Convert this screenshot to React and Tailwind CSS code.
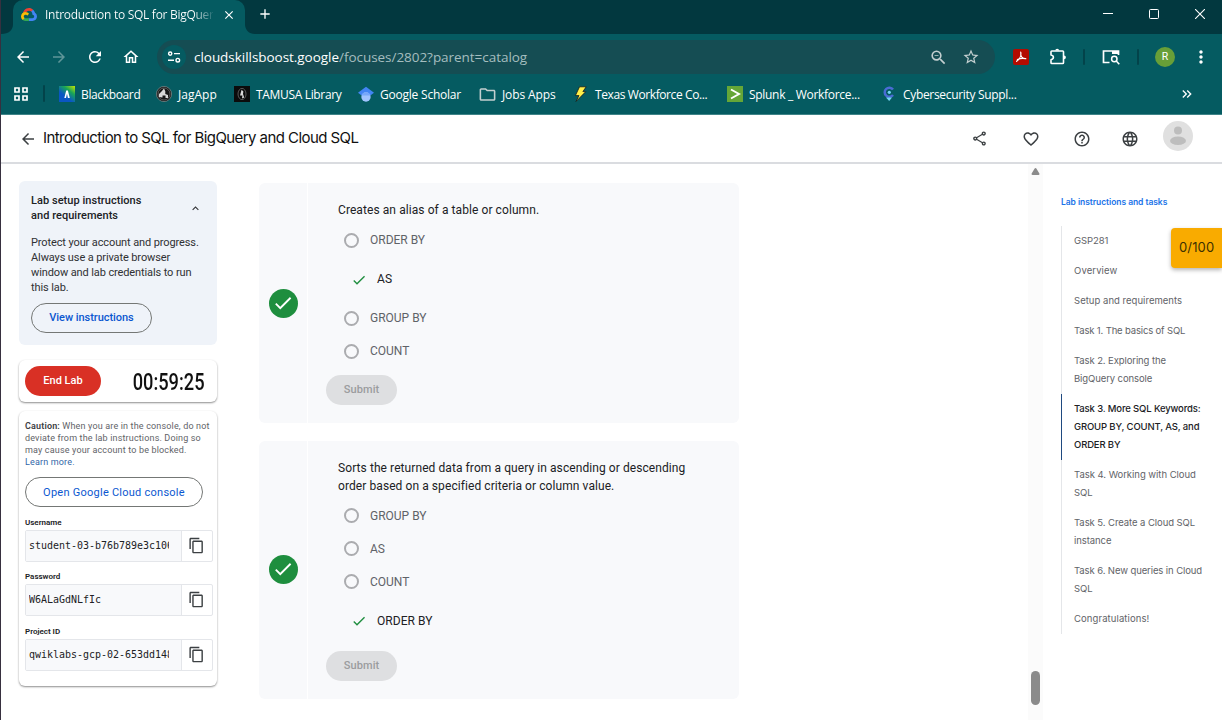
import React from "react";
import {
  MdArrowBack, MdArrowForward, MdRefresh, MdOutlineHome, MdOutlineShare, MdFavoriteBorder,
  MdHelpOutline, MdLanguage, MdOutlineContentCopy, MdCheck, MdClose, MdAdd, MdStarBorder,
  MdMoreVert, MdKeyboardArrowUp, MdOutlineZoomOut, MdOutlineFolder,
  MdKeyboardDoubleArrowRight,
} from "react-icons/md";

const cx = (...c) => c.filter(Boolean).join(" ");

function CloudLogo() {
  return (
    <svg width="16" height="13" viewBox="0 0 256 206" className="shrink-0">
      <path fill="#EA4335" d="M170.252 56.819l22.253-22.253 1.483-9.37C153.437-11.677 88.976-7.496 52.42 33.92 42.267 45.423 34.734 59.764 30.717 74.573l7.97-1.123 44.505-7.34 3.436-3.513c19.797-21.742 53.27-24.667 76.128-6.168l7.496.39z" />
      <path fill="#4285F4" d="M224.205 73.918a100.249 100.249 0 00-30.217-48.722l-31.232 31.232a55.515 55.515 0 0120.379 44.037v5.544c15.35 0 27.797 12.445 27.797 27.796 0 15.352-12.446 27.485-27.797 27.485h-55.671l-5.466 5.934v33.34l5.466 5.231h55.67c39.93.311 72.553-31.494 72.864-71.424a72.303 72.303 0 00-31.793-60.453" />
      <path fill="#34A853" d="M71.87 205.796h55.593V161.29H71.87a27.275 27.275 0 01-11.4-2.498l-7.887 2.42-22.409 22.253-1.952 7.574a71.927 71.927 0 0043.649 14.757" />
      <path fill="#FBBC05" d="M71.87 61.426C31.94 61.664-.237 94.228.001 134.158a72.301 72.301 0 0028.222 56.88l32.248-32.246c-13.99-6.322-20.208-22.786-13.887-36.776 6.32-13.99 22.786-20.208 36.775-13.888a27.796 27.796 0 0113.887 13.888l32.248-32.248A72.224 72.224 0 0071.87 61.426" />
    </svg>
  );
}

function TabStrip() {
  return (
    <div className="flex h-[34px] bg-[#02383f] text-white">
      <svg width="12" height="34" className="shrink-0"><path d="M0 34C8 34 12 30 12 24V34z" fill="#055b61" /></svg>
      <div className="flex w-[232px] shrink-0 items-center rounded-t-[10px] bg-[#055b61] pb-[5px] pl-2">
        <CloudLogo />
        <div className="ml-2 w-[168px] overflow-hidden whitespace-nowrap bg-gradient-to-r from-white from-88% to-white/10 bg-clip-text font-['Open_Sans',sans-serif] text-[12px] leading-4 tracking-[-0.28px] text-transparent">
          Introduction to SQL for BigQuery
        </div>
        <MdClose className="ml-[9px] size-[14px]" />
      </div>
      <svg width="10" height="34" className="shrink-0"><path d="M0 24C0 30 4 34 10 34H0z" fill="#055b61" /></svg>
      <MdAdd className="mt-[6px] ml-[2px] size-4" />
      <div className="ml-auto flex h-7 items-center gap-[36px] pr-[17px]">
        <svg width="10" height="10"><path d="M0 4.5H10" stroke="white" /></svg>
        <svg width="10" height="10"><rect x=".5" y=".5" width="9" height="9" rx="1" fill="none" stroke="white" /></svg>
        <svg width="10" height="10"><path d="M0 0L10 10M10 0L0 10" stroke="white" strokeWidth="1.1" /></svg>
      </div>
    </div>
  );
}

function AddressRow() {
  return (
    <div className="flex h-[46px] items-center text-white">
      <MdArrowBack className="ml-[13px] size-[18px]" />
      <MdArrowForward className="ml-[18px] size-[18px] text-[#5f9699]" />
      <MdRefresh className="ml-[18px] size-[18px]" />
      <MdOutlineHome className="ml-[18px] size-[18px]" />
      <div className="ml-[17px] flex h-[34px] w-[838px] items-center rounded-full bg-[#154d53] pl-[5px]">
        <div className="flex size-6 items-center justify-center rounded-full bg-[#055b61]">
          <svg width="14" height="14" viewBox="0 0 14 14" fill="none" stroke="white" strokeWidth="1.4">
            <circle cx="3.2" cy="3.6" r="1.6" /><path d="M7 3.6H13M1 10.2H7" /><circle cx="10.8" cy="10.2" r="1.8" />
          </svg>
        </div>
        <div className="ml-2 whitespace-nowrap font-['Open_Sans',sans-serif] text-[13.5px] tracking-[-0.04px] text-[#a5bdbf]">
          <span className="text-white">cloudskillsboost.google</span>/focuses/2802?parent=catalog
        </div>
        <MdOutlineZoomOut className="ml-auto size-[19px] text-[#c3cfd0]" />
        <MdStarBorder className="mr-[15px] ml-[14px] size-[18px] text-[#c3cfd0]" />
      </div>
      <svg width="16" height="16" viewBox="0 0 16 16" className="ml-[18px]">
        <rect width="16" height="16" rx="2" fill="#b30b00" />
        <path d="M7.7 3.2C8.4 5.8 7 9.8 3.6 12.3M7.9 4C7.2 7 9.4 9.8 12.8 9.7M4.4 10.6C7 9.3 9.5 8.9 12.6 9.6" fill="none" stroke="white" strokeWidth="1.2" strokeLinecap="round" />
      </svg>
      <svg width="18" height="18" viewBox="0 0 18 18" className="ml-5">
        <path d="M2 7V3.8Q2 3 2.8 3H13.7Q14.5 3 14.5 3.8V14.7Q14.5 15.5 13.7 15.5H2.8Q2 15.5 2 14.7V11.7Q4.4 11.2 4.4 9.3T2 7z" fill="none" stroke="white" strokeWidth="1.6" strokeLinejoin="round" />
        <path d="M6.3 2.6A1.9 1.9 0 0 1 10.1 2.6zM15 7.4A1.9 1.9 0 0 1 15 11.2z" fill="white" />
      </svg>
      <div className="ml-[16px] h-4 w-[2px] rounded bg-[#03434a]" />
      <svg width="18" height="16" viewBox="0 0 18 16" className="ml-[17px]" fill="none" stroke="white">
        <path d="M7.5 13.5H1.5V2H16.5V6" strokeWidth="1.7" /><path d="M10 2H17V5H10z" fill="white" stroke="none" />
        <circle cx="12.3" cy="10" r="2.7" strokeWidth="1.5" /><path d="M14.2 12L17.3 15.2" strokeWidth="1.6" />
      </svg>
      <div className="ml-[17px] h-4 w-[2px] rounded bg-[#03434a]" />
      <div className="ml-4 flex size-5 items-center justify-center rounded-full bg-[#689f38] font-['Roboto',sans-serif] text-[10.5px]">R</div>
      <MdMoreVert className="ml-[16px] size-5" />
    </div>
  );
}

function SealIcon({ square }) {
  return (
    <svg width="16" height="16" viewBox="0 0 16 16">
      {square ? <rect width="16" height="16" fill="#0b0b0b" /> : <circle cx="8" cy="8" r="7.6" fill="#171717" stroke="#9a9a9a" strokeWidth=".6" />}
      <ellipse cx="8" cy="8" rx={square ? 4 : 6} ry={square ? 5.6 : 6} fill="none" stroke="#777" strokeWidth=".7" />
      <path d={square ? "M6 9.5L7.6 3.8L9.4 5.5L9 8L10.2 11.5L8 12.4L8.4 9.6z" : "M3 11V8L5.5 5.5L8 2.5L9.3 5.2V8L12 9V12H9.5V9.5H6.5V11.5z"} fill="#d8d8d8" />
    </svg>
  );
}

const bookmarks = [
  {
    label: "Blackboard", box: "w-[97px]", track: "tracking-[-0.36px]",
    icon: (
      <svg width="16" height="16" viewBox="0 0 16 16">
        <defs><linearGradient id="bb" x1="1" y1="0" x2=".2" y2="1"><stop offset="0" stopColor="#c8e600" /><stop offset=".35" stopColor="#18a558" /><stop offset=".7" stopColor="#0a56c4" /></linearGradient></defs>
        <rect width="16" height="16" fill="url(#bb)" /><path d="M5.3 12L7.2 4.5H8.9L10.8 12H8.9L8 7.8L7 12z" fill="white" />
      </svg>
    ),
  },
  { label: "JagApp", box: "w-[78px]", track: "tracking-[0.02px]", icon: <SealIcon /> },
  { label: "TAMUSA Library", box: "w-[124px]", track: "tracking-[-0.33px]", icon: <SealIcon square /> },
  {
    label: "Google Scholar", box: "w-[121px]", track: "tracking-[-0.22px]",
    icon: (
      <svg width="16" height="16" viewBox="0 0 24 24"><path fill="#4285f4" d="M12 1L0 10l5 4h14l5-4z" /><circle cx="12" cy="16.5" r="7" fill="#a0c3ff" /><path fill="#76a7fa" d="M5.4 14.2a7 7 0 0 1 13.2 0z" /></svg>
    ),
  },
  { label: "Jobs Apps", box: "w-[94px]", track: "tracking-[-0.1px]", icon: <MdOutlineFolder className="-ml-px mr-[-1px] size-[19px] text-[#c3cfd0]" /> },
  {
    label: "Texas Workforce Co...", box: "w-[154px]", track: "tracking-[-0.4px]",
    icon: <svg width="16" height="16" viewBox="0 0 16 16"><path d="M6.5 .8H13.2L9.9 5.6H12.8L3 15.5L6 9.6H2.4z" fill="#fff04a" stroke="#15191a" strokeWidth=".8" /></svg>,
  },
  {
    label: "Splunk _ Workforce...", box: "w-[154px]", track: "tracking-[-0.3px]",
    icon: <svg width="16" height="16" viewBox="0 0 16 16"><rect width="16" height="16" fill="#65a637" /><path d="M4 3.5L12 8L4 12.5" fill="none" stroke="white" strokeWidth="1.9" /></svg>,
  },
  {
    label: "Cybersecurity Suppl...", box: "w-[140px]", track: "tracking-[-0.32px]",
    icon: <svg width="16" height="16" viewBox="0 0 16 16"><path d="M12 3.5A4.6 4.6 0 1 0 12 9" fill="none" stroke="#4a6cd4" strokeWidth="2.5" /><path d="M5 11.5H11L8.2 15z" fill="#74d4f5" /><circle cx="8.3" cy="6.3" r="1.6" fill="#74d4f5" /></svg>,
  },
];

function BookmarkRow() {
  return (
    <div className="flex h-[34px] items-start pt-[5px] font-['Open_Sans',sans-serif] text-[12px] text-white">
      <svg width="16" height="16" className="mt-[1px] ml-3" fill="none" stroke="white" strokeWidth="1.7">
        <path d="M2 2H6V6H2zM10 2H14V6H10zM2 10H6V14H2zM10 10H14V14H10z" />
      </svg>
      <div className="mr-[14px] ml-[14px] h-[17px] w-[2px] rounded bg-[#03434a]" />
      {bookmarks.map((b) => (
        <div key={b.label} className={cx("flex h-[18px] shrink-0 items-center gap-[6px] whitespace-nowrap leading-[17px]", b.box, b.track)}>
          <span className="shrink-0">{b.icon}</span>{b.label}
        </div>
      ))}
      <MdKeyboardDoubleArrowRight className="mt-[1px] ml-auto mr-[27px] size-4" />
    </div>
  );
}

function PageHeader() {
  return (
    <div className="flex h-[49px] items-center border-b-2 border-[#dadce0] bg-white text-[#3c4043]">
      <MdArrowBack className="ml-[18px] size-[18px]" />
      <div className="ml-[6px] whitespace-nowrap font-['Inter',sans-serif] text-[15px] tracking-[-0.57px] text-[#111]">
        Introduction to SQL for BigQuery and Cloud SQL
      </div>
      <MdOutlineShare className="ml-auto size-[17px]" />
      <MdFavoriteBorder className="ml-[34px] size-[18px]" />
      <MdHelpOutline className="ml-[33px] size-[18px]" />
      <MdLanguage className="ml-[30px] size-[18px]" />
      <svg width="30" height="30" className="mr-[29px] mb-[5px] ml-6">
        <circle cx="15" cy="15" r="15" fill="#e0e0e0" /><circle cx="15" cy="9.5" r="4" fill="#bdbdbd" /><ellipse cx="15" cy="19.8" rx="8" ry="4.3" fill="#bdbdbd" />
      </svg>
    </div>
  );
}

function Credential({ label, value, className }) {
  return (
    <div className={className}>
      <div className="font-['Roboto',sans-serif] text-[8px] leading-[10px] font-semibold text-[#202124]">{label}</div>
      <div className="mt-[2px] flex h-8 w-[188px] rounded-[2px] border border-[#e4e6ea]">
        <div className="flex w-[156px] items-center border-r border-[#e4e6ea] bg-[#f8f9fb] pl-[3px]">
          <div className="w-[140px] overflow-hidden whitespace-nowrap font-['DejaVu_Sans_Mono',monospace] text-[9.97px] leading-4 text-[#202124]">{value}</div>
        </div>
        <MdOutlineContentCopy className="mt-[6px] ml-[6px] size-[17px] text-[#3c4043]" />
      </div>
    </div>
  );
}

function LabPanel() {
  return (
    <div className="ml-[18px] mt-[17px] flex w-[198px] shrink-0 flex-col whitespace-nowrap font-['Roboto',sans-serif]">
      <div className="h-[164px] rounded-md bg-[#eff3f9] px-3 pt-3 text-[11px] leading-[15px] text-[#303134]">
        <div className="flex items-center justify-between">
          <div className="font-medium tracking-[0.04px] text-[#202124]">Lab setup instructions<br />and requirements</div>
          <MdKeyboardArrowUp className="mr-[3px] size-[13px]" />
        </div>
        <div className="mt-3 tracking-[-0.11px]">
          Protect your account and progress.<br />Always use a private browser<br />window and lab credentials to run<br />this lab.
        </div>
        <button className="mt-2 flex h-[30px] w-[121px] items-center justify-center rounded-full border border-[#747775] pb-[1px] font-medium tracking-[-0.04px] text-[#0b57d0]">View instructions</button>
      </div>
      <div className="mt-[15px] flex h-[42px] items-center justify-between rounded-md bg-white pr-[13px] pl-[6px] shadow-[0_1px_2px_rgba(0,0,0,0.45)]">
        <button className="h-[30px] w-[76px] rounded-full bg-[#d93025] text-[11px] font-medium text-white">End Lab</button>
        <div className="origin-right scale-x-[0.76] pt-[2px] text-[24px] leading-[30px] font-medium text-[#111]">00:59:25</div>
      </div>
      <div className="mt-[9px] h-[275px] rounded-md bg-white px-[6px] pt-[9px] shadow-[0_1px_2px_rgba(0,0,0,0.45)]">
        <div className="text-[9px] leading-3 tracking-[0.16px] text-[#5f6368]">
          <b className="font-semibold text-[#3c4043]">Caution:</b> When you are in the console, do not<br />deviate from the lab instructions. Doing so<br />may cause your account to be blocked.<br />
          <span className="text-[#3367a8]">Learn more.</span>
        </div>
        <button className="mt-[9px] flex h-[30px] w-[178px] items-center justify-center rounded-full border border-[#747775] pt-[2px] text-[11px] font-[450] tracking-[0.25px] text-[#0b57d0]">Open Google Cloud console</button>
        <Credential className="mt-[11px]" label="Username" value="student-03-b76b789e3c106" />
        <Credential className="mt-[10px]" label="Password" value="W6ALaGdNLfIc" />
        <Credential className="mt-[11px]" label="Project ID" value="qwiklabs-gcp-02-653dd148" />
      </div>
    </div>
  );
}

function Question({ lines, options, answer, className, textClass, badgeClass, labelClass, submitClass }) {
  return (
    <div className={cx("flex w-[480px] rounded-md bg-[#f8f9fb]", className)}>
      <div className={cx("flex w-[49px] items-center border-r border-white pl-[10px]", badgeClass)}>
        <div className="flex size-[29px] items-center justify-center rounded-full bg-[#1e8e3e] pr-px pb-px"><MdCheck className="size-[22px] text-white" /></div>
      </div>
      <div className="pt-[18px] pl-[18px] font-['Roboto',sans-serif] text-[12px] text-[#202124]">
        <div className={cx("pl-3 leading-[18px] tracking-[0.08px] whitespace-nowrap", textClass)}>
          {lines.map((l) => <div key={l}>{l}</div>)}
        </div>
        {options.map((o) =>
          o === answer ? (
            <div key={o} className="flex h-[45px] items-center gap-[10px] pl-[25px]">
              <MdCheck className="size-4 text-[#1e8e3e]" /><span className={cx("tracking-[0.06px]", labelClass)}>{o}</span>
            </div>
          ) : (
            <div key={o} className="flex h-[33px] items-center gap-[11px] pl-[18px] text-[#5f6368]">
              <span className="size-[15px] rounded-full border-2 border-[#abacaf]" /><span className={labelClass}>{o}</span>
            </div>
          )
        )}
        <button className={cx("block h-[30px] w-[71px] rounded-full bg-[#dedfe1] text-[11px] font-medium tracking-[0.1px] text-[#9b9c9e]", submitClass)}>Submit</button>
      </div>
    </div>
  );
}

const toc = [
  { lines: ["GSP281"] },
  { lines: ["Overview"], track: "tracking-[0.12px]" },
  { lines: ["Setup and requirements"], track: "tracking-[0.03px]" },
  { lines: ["Task 1. The basics of SQL"], track: "tracking-[-0.16px]" },
  { lines: ["Task 2. Exploring the", "BigQuery console"] },
  { lines: ["Task 3. More SQL Keywords:", "GROUP BY, COUNT, AS, and", "ORDER BY"], track: "tracking-[-0.14px]", active: true },
  { lines: ["Task 4. Working with Cloud", "SQL"], track: "tracking-[-0.03px]" },
  { lines: ["Task 5. Create a Cloud SQL", "instance"], track: "tracking-[-0.07px]" },
  { lines: ["Task 6. New queries in Cloud", "SQL"] },
  { lines: ["Congratulations!"], track: "tracking-[0.1px]" },
];

function Outline() {
  return (
    <div className="relative ml-[18px] flex-1 pt-[32px] font-['Inter',sans-serif] whitespace-nowrap">
      <div className="h-[30px] text-[8.5px] leading-3 font-semibold tracking-[-0.06px] text-[#1a73e8]">Lab instructions and tasks</div>
      <ul>
        {toc.map((item) => (
          <li key={item.lines[0]} className={cx("border-l py-[6px] pl-3 text-[9.5px] leading-[18px]", item.track || "tracking-[-0.1px]", item.active ? "border-[#1f4a80] font-medium text-[#202124]" : "border-[#e4e6e9] text-[#5f6368]")}>
            {item.lines.map((l) => <div key={l}>{l}</div>)}
          </li>
        ))}
      </ul>
      <div className="absolute top-[64px] right-0 flex h-10 w-[51px] items-center rounded-l bg-[#f9ab00] pl-[8px] text-[13px] tracking-[0.15px] text-[#3c3000] shadow-[0_2px_4px_rgba(0,0,0,0.3)]">0/100</div>
    </div>
  );
}

export default function App() {
  return (
    <div className="h-[720px] w-[1222px] overflow-hidden border-l border-[#37303f] bg-white">
      <TabStrip />
      <div className="h-[81px] border-b border-[#3f8488] bg-[#055b61]">
        <AddressRow />
        <BookmarkRow />
      </div>
      <PageHeader />
      <div className="flex h-[556px] items-stretch">
        <LabPanel />
        <div className="ml-[42px] w-[769px] shrink-0 pt-[19px]">
          <Question className="h-[240px]" textClass="mb-[5px]" labelClass="pb-[2px]" submitClass="mt-[7px] pt-px" lines={["Creates an alias of a table or column."]} options={["ORDER BY", "AS", "GROUP BY", "COUNT"]} answer="AS" />
          <Question className="mt-[18px] h-[258px]" textClass="mb-1" badgeClass="pb-px" submitClass="mt-2" lines={["Sorts the returned data from a query in ascending or descending", "order based on a specified criteria or column value."]} options={["GROUP BY", "AS", "COUNT", "ORDER BY"]} answer="ORDER BY" />
        </div>
        <div className="flex w-[15px] shrink-0 flex-col items-center justify-between bg-[#fbfbfb] pt-[3px] pb-[15px]">
          <svg width="9" height="8"><path d="M1.5 7H7.5L4.5 2z" fill="#8b8b8b" stroke="#8b8b8b" strokeWidth="2" strokeLinejoin="round" /></svg>
          <div className="h-[34px] w-[9px] rounded-full bg-[#8b8b8b]" />
        </div>
        <Outline />
      </div>
    </div>
  );
}
